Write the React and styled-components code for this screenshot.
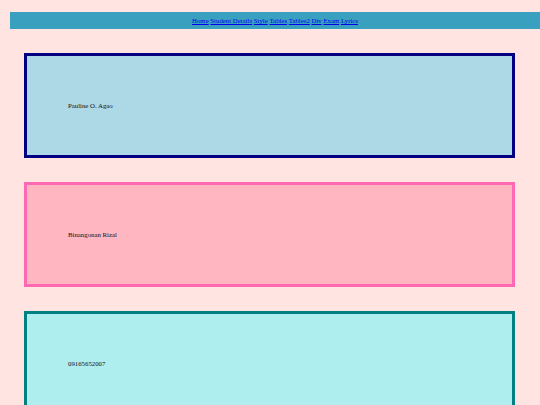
import React from "react";
import styled, { createGlobalStyle } from "styled-components";

const GlobalStyle = createGlobalStyle`
  html, body {
    margin: 0;
    padding: 0;
    background: #ffe4e1;
    font-family: "Liberation Serif", "Times New Roman", serif;
  }
`;

const Page = styled.div`
  display: flex;
  flex-direction: column;
  padding-top: 12px;
`;

const Nav = styled.nav`
  margin-left: 10px;
  height: 17px;
  background: #3aa0bf;
  display: flex;
  align-items: center;
  justify-content: center;
  gap: 1.7px;
  font-size: 6.8px;

  a {
    color: #0000ee;
    text-decoration: underline;
  }
`;

const Boxes = styled.div`
  display: flex;
  flex-direction: column;
  gap: 24px;
  padding: 24px 25px 0 24px;
`;

const Box = styled.div`
  box-sizing: border-box;
  height: 105px;
  border: 3px solid ${(p) => p.$border};
  background: ${(p) => p.$bg};
  display: flex;
  align-items: center;
  padding-left: 41px;
  font-size: 6.8px;
  color: #111;
`;

const links = ["Home", "Student Details", "Style", "Tables", "Tables2", "Div", "Exam", "Lyrics"];

const boxes = [
  { text: "Pauline O. Agao", bg: "#add8e6", border: "#000080" },
  { text: "Binangonan Rizal", bg: "#ffb6c1", border: "#ff69b4" },
  { text: "09165652007", bg: "#afeeee", border: "#008080" },
];

const App = () => {
  return (
    <>
      <GlobalStyle />
      <Page>
        <Nav>
          {links.map((l) => (
            <a key={l} href="#">
              {l}
            </a>
          ))}
        </Nav>
        <Boxes>
          {boxes.map((b) => (
            <Box key={b.text} $bg={b.bg} $border={b.border}>
              {b.text}
            </Box>
          ))}
        </Boxes>
      </Page>
    </>
  );
};

export default App;
